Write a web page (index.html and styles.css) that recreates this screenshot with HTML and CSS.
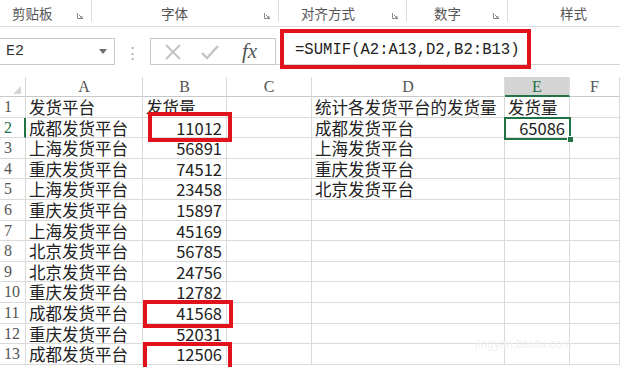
FILE: index.html
```html
<!DOCTYPE html>
<html lang="zh-CN">
<head>
    <meta charset="UTF-8">
    <title>SUMIF</title>
    <link rel="stylesheet" href="styles.css">
</head>
<body>
<div class="page">
    <div class="ribbon">
        <div class="grp g1"><span class="lbl">剪贴板</span><svg class="launch" viewBox="0 0 6 6"><path d="M0.5 0v5.5H6" fill="none" stroke="#8a8a8a"/><path d="M2 2l3 3M5 3v2H3" fill="none" stroke="#8a8a8a"/></svg></div>
        <div class="grp g2"><span class="lbl">字体</span><svg class="launch" viewBox="0 0 6 6"><path d="M0.5 0v5.5H6" fill="none" stroke="#8a8a8a"/><path d="M2 2l3 3M5 3v2H3" fill="none" stroke="#8a8a8a"/></svg></div>
        <div class="grp g3"><span class="lbl">对齐方式</span><svg class="launch" viewBox="0 0 6 6"><path d="M0.5 0v5.5H6" fill="none" stroke="#8a8a8a"/><path d="M2 2l3 3M5 3v2H3" fill="none" stroke="#8a8a8a"/></svg></div>
        <div class="grp g4"><span class="lbl">数字</span><svg class="launch" viewBox="0 0 6 6"><path d="M0.5 0v5.5H6" fill="none" stroke="#8a8a8a"/><path d="M2 2l3 3M5 3v2H3" fill="none" stroke="#8a8a8a"/></svg></div>
        <div class="grp g5"><span class="lbl">样式</span></div>
    </div>

    <div class="fbar">
        <div class="namebox">
            <span>E2</span>
            <svg class="caret" viewBox="0 0 8 5"><path d="M0 0h8L4 5z" fill="#6d6d6d"/></svg>
        </div>
        <span class="dots">⋮</span>
        <div class="fxbox">
            <svg class="ico" viewBox="0 0 20 20"><path d="M3 3l14 14M17 3L3 17" stroke="#c4c4c4" stroke-width="2" fill="none"/></svg>
            <svg class="ico ok" viewBox="0 0 20 20"><path d="M2 11l5 5L18 4" stroke="#c4c4c4" stroke-width="2.4" fill="none"/></svg>
            <span class="fx">fx</span>
        </div>
        <div class="formula">=SUMIF(A2:A13,D2,B2:B13)</div>
    </div>

    <div class="sheet">
        <div class="ch corner"><svg viewBox="0 0 10 10"><path d="M10 0v10H0z" fill="#d6d6d6"/></svg></div>
        <div class="ch">A</div><div class="ch">B</div><div class="ch">C</div><div class="ch">D</div><div class="ch active">E</div><div class="ch">F</div>

        <div class="rh">1</div><div class="c">发货平台</div><div class="c">发货量</div><div class="c"></div><div class="c">统计各发货平台的发货量</div><div class="c">发货量</div><div class="c"></div>
        <div class="rh on">2</div><div class="c">成都发货平台</div><div class="c n">11012</div><div class="c"></div><div class="c">成都发货平台</div><div class="c n">65086</div><div class="c"></div>
        <div class="rh">3</div><div class="c">上海发货平台</div><div class="c n">56891</div><div class="c"></div><div class="c">上海发货平台</div><div class="c"></div><div class="c"></div>
        <div class="rh">4</div><div class="c">重庆发货平台</div><div class="c n">74512</div><div class="c"></div><div class="c">重庆发货平台</div><div class="c"></div><div class="c"></div>
        <div class="rh">5</div><div class="c">上海发货平台</div><div class="c n">23458</div><div class="c"></div><div class="c">北京发货平台</div><div class="c"></div><div class="c"></div>
        <div class="rh">6</div><div class="c">重庆发货平台</div><div class="c n">15897</div><div class="c"></div><div class="c"></div><div class="c"></div><div class="c"></div>
        <div class="rh">7</div><div class="c">上海发货平台</div><div class="c n">45169</div><div class="c"></div><div class="c"></div><div class="c"></div><div class="c"></div>
        <div class="rh">8</div><div class="c">北京发货平台</div><div class="c n">56785</div><div class="c"></div><div class="c"></div><div class="c"></div><div class="c"></div>
        <div class="rh">9</div><div class="c">北京发货平台</div><div class="c n">24756</div><div class="c"></div><div class="c"></div><div class="c"></div><div class="c"></div>
        <div class="rh">10</div><div class="c">重庆发货平台</div><div class="c n">12782</div><div class="c"></div><div class="c"></div><div class="c"></div><div class="c"></div>
        <div class="rh">11</div><div class="c">成都发货平台</div><div class="c n">41568</div><div class="c"></div><div class="c"></div><div class="c"></div><div class="c"></div>
        <div class="rh">12</div><div class="c">重庆发货平台</div><div class="c n">52031</div><div class="c"></div><div class="c"></div><div class="c"></div><div class="c"></div>
        <div class="rh">13</div><div class="c">成都发货平台</div><div class="c n">12506</div><div class="c"></div><div class="c"></div><div class="c"></div><div class="c"></div>
    </div>

    <!-- overlays -->
    <div class="selected"><i class="handle"></i></div>
    <div class="mark m-formula"></div>
    <div class="mark m-b2"></div>
    <div class="mark m-b11"></div>
    <div class="mark m-b13"></div>
    <div class="watermark">jingyan.baidu.com</div>
</div>
</body>
</html>
```

FILE: styles.css
```css
body {
    margin: 0;
    background: #fff;
    font-family: "Noto Sans CJK SC", "Liberation Sans", sans-serif;
}
.page {
    position: relative;
    width: 620px;
    height: 367px;
    overflow: hidden;
}

/* ribbon group labels */
.ribbon {
    display: flex;
    height: 26px;
    border-bottom: 1px solid #dadada;
}
.grp {
    display: flex;
    align-items: flex-start;
    height: 22px;
    border-right: 1px solid #dcdcdc;
    box-sizing: border-box;
}
.g1 { width: 92px; padding-left: 12px; }
.g2 { width: 187px; padding-left: 69px; }
.g3 { width: 128px; padding-left: 22px; }
.g4 { width: 101px; padding-left: 27px; }
.g5 { width: 112px; padding-left: 52px; border-right: none; }
.lbl {
    font-size: 13.5px;
    line-height: 18px;
    padding-top: 4px;
    color: #555;
}
.launch {
    width: 6px;
    height: 6px;
    margin: 13px 8px 0 auto;
}

/* formula bar */
.fbar {
    display: flex;
    align-items: flex-start;
    height: 38px;
    padding-top: 11px;
    box-sizing: border-box;
}
.namebox {
    display: flex;
    align-items: center;
    width: 115px;
    height: 27px;
    border: 1px solid #c8c8c8;
    border-left: none;
    box-sizing: border-box;
    padding: 0 7px 0 6px;
    font-family: "Liberation Mono", monospace;
    font-size: 15px;
    color: #333;
}
.caret {
    width: 8px;
    height: 5px;
    margin-left: auto;
}
.dots {
    width: 35px;
    text-align: center;
    color: #aaa;
    font-size: 15px;
    line-height: 27px;
}
.fxbox {
    display: flex;
    align-items: center;
    width: 126px;
    height: 27px;
    border: 1px solid #c8c8c8;
    box-sizing: border-box;
    padding-left: 12px;
}
.ico {
    width: 20px;
    height: 20px;
}
.ok {
    margin-left: 17px;
}
.fx {
    margin-left: 22px;
    font-family: "Liberation Serif", serif;
    font-style: italic;
    font-size: 21px;
    line-height: 25px;
    color: #555;
}
.formula {
    flex: 1;
    height: 27px;
    border-bottom: 1px solid #d4d4d4;
    box-sizing: border-box;
    padding-left: 19px;
    font-family: "Liberation Mono", monospace;
    font-size: 15.6px;
    line-height: 25px;
    color: #222;
}

/* sheet */
.sheet {
    display: grid;
    grid-template-columns: 26px 117px 84px 85px 193px 65px 50px;
    grid-template-rows: 20px repeat(13, 20.6px);
    margin-top: 12px;
}
.sheet > div {
    box-sizing: border-box;
    border-right: 1px solid #dadada;
    border-bottom: 1px solid #dadada;
    white-space: nowrap;
}
.ch {
    text-align: center;
    font-family: "Liberation Serif", serif;
    font-size: 16px;
    line-height: 19px;
    color: #555;
}
.sheet > .ch {
    border-bottom-color: #c8c8c8;
}
.corner svg {
    width: 8px;
    height: 8px;
    margin: 9px 0 0 13px;
    display: block;
}
.sheet > .ch.active {
    background: #d4d4d4;
    color: #217346;
    border-bottom: 2px solid #217346;
}
.rh {
    padding-left: 4px;
    font-family: "Liberation Serif", serif;
    font-size: 16px;
    line-height: 20px;
    color: #555;
}
.sheet > .rh.on {
    color: #217346;
    border-right: 2px solid #217346;
}
.c {
    padding: 1px 4px 0 3px;
    font-size: 16.5px;
    line-height: 19px;
    color: #222;
}
.n {
    text-align: right;
}

/* active cell */
.selected {
    position: absolute;
    left: 504px;
    top: 117px;
    width: 63px;
    height: 19px;
    border: 2px solid #217346;
}
.handle {
    position: absolute;
    right: -5px;
    bottom: -5px;
    width: 5px;
    height: 5px;
    background: #217346;
    border: 1px solid #fff;
}

/* red highlight boxes */
.mark {
    position: absolute;
    border: 4px solid #e2121c;
    box-sizing: border-box;
}
.m-formula { left: 280px; top: 29px; width: 251px; height: 40px; }
.m-b2 { left: 148px; top: 112px; width: 84px; height: 30px; }
.m-b11 { left: 143px; top: 300px; width: 90px; height: 28px; }
.m-b13 { left: 143px; top: 342px; width: 89px; height: 30px; }

.watermark {
    position: absolute;
    left: 475px;
    top: 337px;
    font-family: "Liberation Sans", sans-serif;
    font-size: 12px;
    color: #f0f0f0;
    filter: blur(0.6px);
}
```
